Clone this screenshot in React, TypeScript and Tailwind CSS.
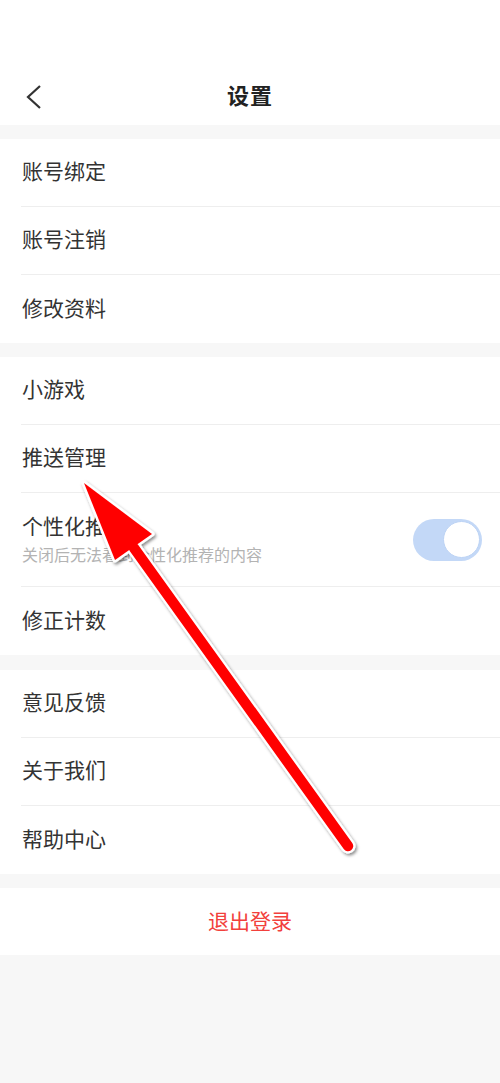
import React from "react";

const font = { fontFamily: '"Noto Sans CJK SC", "Noto Sans", sans-serif' };

function Row({ label, last }: { label: string; last?: boolean }) {
  return (
    <div className="h-[68px] pl-[21px] bg-white">
      <div
        className={
          "h-full flex items-center text-[21px] text-[#333333] pb-[3px] " +
          (last ? "" : "border-b border-[#eeeeee]")
        }
      >
        <span className="pl-px">{label}</span>
      </div>
    </div>
  );
}

export default function App() {
  return (
    <div className="w-[500px] min-h-[1083px] bg-[#f7f7f7] relative overflow-hidden" style={font}>
      {/* header */}
      <div className="h-[125px] bg-white pt-[63px] relative">
        <div className="h-[62px] flex items-center justify-center">
          <span className="text-[22px] font-bold text-[#222222] tracking-[1px]">设置</span>
        </div>
        <svg className="absolute left-[24px] top-[84px]" width="20" height="26" viewBox="0 0 20 26">
          <polyline points="16,2 4,13 16,24" fill="none" stroke="#333333" strokeWidth="2.2" strokeLinejoin="miter" />
        </svg>
      </div>

      <div className="h-[14px]" />
      <div>
        <Row label="账号绑定" />
        <Row label="账号注销" />
        <Row label="修改资料" last />
      </div>

      <div className="h-[14px]" />
      <div>
        <Row label="小游戏" />
        <Row label="推送管理" />
        <div className="h-[94px] pl-[21px] bg-white">
          <div className="h-full flex items-center border-b border-[#eeeeee] pr-[18px]">
            <div className="flex-1 flex flex-col pl-px pb-[3px]">
              <span className="text-[21px] text-[#333333] leading-[30px]">个性化推荐</span>
              <span className="text-[16px] text-[#b3b3b3] leading-[24px] mt-[2px]">关闭后无法看到个性化推荐的内容</span>
            </div>
            <div className="w-[69px] h-[42px] rounded-full bg-[#c3d8f7] flex items-center justify-end pr-[2px]">
              <div className="w-[37px] h-[37px] rounded-full bg-white border border-[#bcd3f5]" />
            </div>
          </div>
        </div>
        <Row label="修正计数" last />
      </div>

      <div className="h-[15px]" />
      <div>
        <Row label="意见反馈" />
        <Row label="关于我们" />
        <Row label="帮助中心" last />
      </div>

      <div className="h-[14px]" />
      <div className="h-[67px] bg-white flex items-center justify-center pb-[2px]">
        <span className="text-[21px] text-[#f2403c]">退出登录</span>
      </div>

      {/* annotation arrow */}
      <svg className="absolute left-0 top-0 pointer-events-none" width="500" height="1083" viewBox="0 0 500 1083">
        <defs>
          <filter id="sh" x="-20%" y="-20%" width="140%" height="140%">
            <feDropShadow dx="1.5" dy="2" stdDeviation="1.8" floodColor="#000" floodOpacity="0.45" />
          </filter>
        </defs>
        <g filter="url(#sh)">
          <line x1="348" y1="846" x2="134" y2="548" stroke="#ffffff" strokeWidth="15" strokeLinecap="round" />
          <polygon points="84,483 152,534 115,560" fill="#ffffff" stroke="#ffffff" strokeWidth="5" strokeLinejoin="round" />
        </g>
        <line x1="348" y1="846" x2="134" y2="548" stroke="#ff0000" strokeWidth="10.5" strokeLinecap="round" />
        <polygon points="84,483 152,534 115,560" fill="#ff0000" />
      </svg>
    </div>
  );
}
